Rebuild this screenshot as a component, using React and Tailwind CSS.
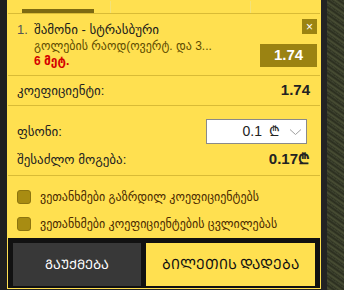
export default function App() {
  const font = { fontFamily: '"Liberation Sans", "DejaVu Sans", sans-serif' };
  return (
    <div className="flex w-[344px] h-[290px] bg-[#222222] overflow-hidden" style={font}>
      <div className="w-[7px] shrink-0 bg-[#1f1f1f]" />
      <div className="w-[314px] shrink-0 h-[289px] bg-[#ffe050] border border-[#ffe050] flex flex-col text-[#222]">
        {/* tabs strip */}
        <div className="h-[13px] shrink-0 flex border-b border-[#d9bb36]">
          <div className="w-[103px] flex justify-start items-end pl-[14px] border-r border-[#f3e27a]">
            <div className="w-[72px] h-[4px] bg-[#7d6a12]" />
          </div>
          <div className="w-[140px] border-r border-[#f3e27a]" />
          <div className="flex-1" />
        </div>
        {/* selection */}
        <div className="h-[62px] shrink-0 flex border-b border-[#d9bb36]">
          <div className="flex-1 flex pl-[9px] pt-[8px]">
            <div className="w-[17px] text-[13px] leading-[16px] text-[#555]">1.</div>
            <div className="flex flex-col">
              <div className="text-[13px] leading-[16px] text-[#1a1a1a]">შამონი - სტრასბური</div>
              <div className="text-[12px] leading-[16px] text-[#5e4c00]">გოლების რაოდ(ოვერტ. და 3...</div>
              <div className="text-[12px] leading-[14px] text-[#d40000] font-bold">6 მეტ.</div>
            </div>
          </div>
          <div className="w-[57px] mr-[3px] flex flex-col items-end pt-[5px]">
            <div className="w-[15px] h-[15px] bg-[#9b8312] text-white flex items-center justify-center text-[12px] leading-none">×</div>
            <div className="mt-[10px] w-[57px] h-[23px] bg-[#9b8312] text-white font-bold text-[15px] flex items-center justify-center">1.74</div>
          </div>
        </div>
        {/* coef */}
        <div className="h-[30px] shrink-0 flex items-center justify-between pl-[9px] pr-[10px] border-b border-[#d9bb36]">
          <span className="text-[13px]">კოეფიციენტი:</span>
          <span className="text-[15px] font-bold">1.74</span>
        </div>
        {/* stake */}
        <div className="h-[70px] shrink-0 flex flex-col pl-[9px] pr-[10px] border-b border-[#d9bb36]">
          <div className="mt-[13px] flex items-center justify-between">
            <span className="text-[13px]">ფსონი:</span>
            <div className="w-[101px] h-[25px] mr-[3px] bg-white border border-[#8a8a8a] flex items-center justify-end pr-[4px]">
              <span className="text-[14px] text-[#222]">0.1</span>
              <span className="text-[14px] text-[#222] ml-[7px]">₾</span>
              <svg className="ml-[9px]" width="13" height="8" viewBox="0 0 13 8" fill="none" stroke="#a0a0a0" strokeWidth="1">
                <path d="M1 1.5 L6.5 6.5 L12 1.5" />
              </svg>
            </div>
          </div>
          <div className="mt-[4px] flex items-center justify-between">
            <span className="text-[13px]">შესაძლო მოგება:</span>
            <span className="text-[15px] font-bold">0.17₾</span>
          </div>
        </div>
        {/* checkboxes */}
        <div className="flex-1 flex flex-col pl-[9px] pt-[12px] gap-[9px]">
          <div className="flex items-center gap-[9px]">
            <div className="w-[14px] h-[14px] rounded-[3px] bg-[#a88c12] border border-[#8c7410]" />
            <span className="text-[12px] text-[#4a2a00]">ვეთანხმები გაზრდილ კოეფიციენტებს</span>
          </div>
          <div className="flex items-center gap-[9px]">
            <div className="w-[14px] h-[14px] rounded-[3px] bg-[#a88c12] border border-[#8c7410]" />
            <span className="text-[12px] text-[#4a2a00]">ვეთანხმები კოეფიციენტების ცვლილებას</span>
          </div>
        </div>
        {/* buttons */}
        <div className="h-[50px] shrink-0 bg-[#111] flex gap-[5px] pt-[5px] pb-[2px] px-[5px]">
          <button className="w-[128px] bg-[#383838] text-white text-[13px] flex items-center justify-center">ᲒᲐᲣᲥᲛᲔᲑᲐ</button>
          <button className="flex-1 bg-[#ffe050] text-[#111] text-[14px] flex items-center justify-center">ᲑᲘᲚᲔᲗᲘᲡ ᲓᲐᲓᲔᲑᲐ</button>
        </div>
      </div>
      <div className="w-[6px] shrink-0 bg-[#232323]" />
      <div className="flex-1 bg-[#363a28] bg-[repeating-linear-gradient(35deg,#2f3322_0px,#4a4f35_2px,#2a2d1e_4px,#3f4430_6px)]" />
    </div>
  );
}
